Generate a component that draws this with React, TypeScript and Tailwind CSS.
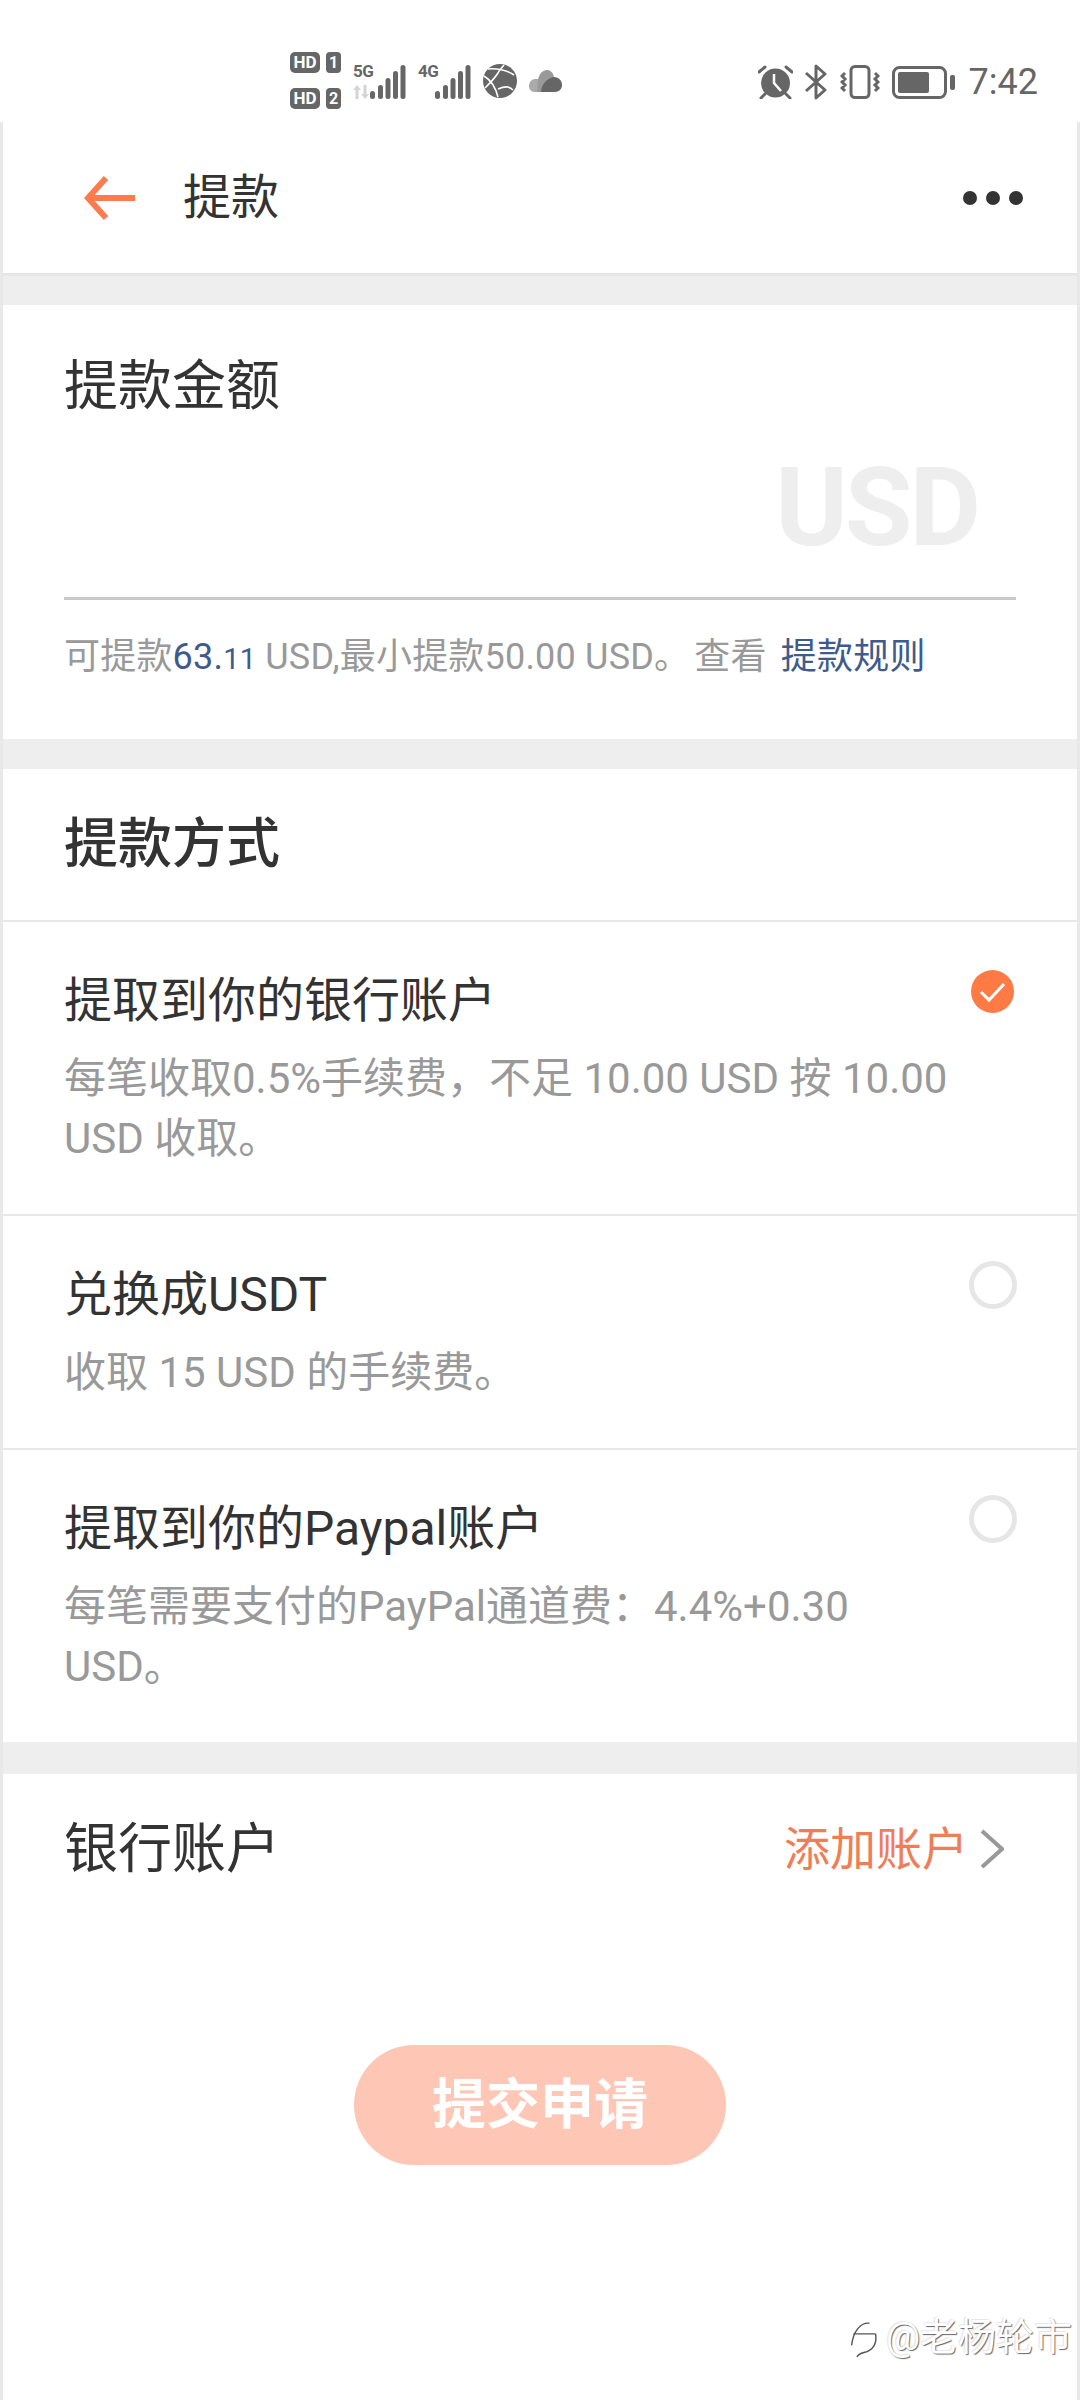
export default function App() {
  return (
    <div className="w-[1080px] h-[2400px] relative overflow-hidden bg-white font-['Roboto','Noto_Sans_CJK_SC',sans-serif] text-[#333333]">
      <StatusBar />
      <div className="h-[2278px] border-x-[3px] border-[#e8e8e8] flex flex-col">
        {/* header */}
        <div className="h-[151px] shrink-0 flex items-center pl-[80px] pr-[54px]">
          <svg width="52" height="44" viewBox="0 0 52 44" fill="none" stroke="#ff7a4d" strokeWidth="6">
            <path d="M23 2 L5 22 L23 42" />
            <path d="M5 22 H52" />
          </svg>
          <span className="ml-[48px] text-[48px] leading-[60px]">提款</span>
          <div className="ml-auto flex gap-[9px]">
            <i className="w-[14px] h-[14px] rounded-full bg-[#333333]" />
            <i className="w-[14px] h-[14px] rounded-full bg-[#333333]" />
            <i className="w-[14px] h-[14px] rounded-full bg-[#333333]" />
          </div>
        </div>
        <div className="h-[32px] shrink-0 bg-[#eeeeee] border-t-[3px] border-[#e6e6e6]" />

        {/* amount */}
        <div className="h-[434px] shrink-0 px-[61px] pt-[50px]">
          <div className="text-[54px] leading-[64px]">提款金额</div>
          <div className="h-[181px] border-b-[3px] border-[#c8c8c8] flex justify-end pr-[38px]">
            <span className="text-[110px] leading-[110px] mt-[34px] font-bold tracking-[-3px] text-[#eeeeee]">USD</span>
          </div>
          <div className="mt-[33px] text-[36px] leading-[48px] tracking-[0.2px] text-[#999999] whitespace-nowrap">
            可提款<span className="text-[#3f5a8c]">63.<span className="text-[29px]">11</span></span> USD,最小提款50.00 USD。<span className="ml-[4px]">查看</span> <span className="ml-[5px] text-[#3f5a8c]">提款规则</span>
          </div>
        </div>
        <div className="h-[30px] shrink-0 bg-[#eeeeee]" />

        {/* method */}
        <div className="h-[151px] shrink-0 flex items-center px-[61px] text-[54px] font-medium">提款方式</div>
        <MethodRow title="提取到你的银行账户" lines={["每笔收取0.5%手续费，不足 10.00 USD 按 10.00", "USD 收取。"]} checked />
        <MethodRow title="兑换成USDT" lines={["收取 15 USD 的手续费。"]} />
        <MethodRow title="提取到你的Paypal账户" lines={["每笔需要支付的PayPal通道费：4.4%+0.30", "USD。"]} />
        <div className="h-[32px] shrink-0 bg-[#eeeeee]" />

        {/* bank */}
        <div className="h-[150px] shrink-0 flex items-center pl-[61px] pr-[73px]">
          <span className="text-[54px]">银行账户</span>
          <span className="ml-auto text-[46px] text-[#ef7d55]">添加账户</span>
          <svg className="ml-[12px]" width="24" height="40" viewBox="0 0 24 40" fill="none" stroke="#999999" strokeWidth="4">
            <path d="M2 2 L22 20 L2 38" />
          </svg>
        </div>
        <div className="mt-[121px] flex justify-center">
          <button className="w-[372px] h-[120px] rounded-full bg-[#fec6b5] text-white text-[54px] font-bold">提交申请</button>
        </div>
      </div>

      {/* watermark */}
      <div className="absolute left-[848px] top-[2312px] flex items-start gap-[6px] whitespace-nowrap text-[38px] leading-[50px] text-white [text-shadow:1px_1px_1px_rgba(0,0,0,0.6),-1px_-1px_1px_rgba(0,0,0,0.1)]">
        <svg className="mt-[6px]" width="32" height="46" viewBox="0 0 36 50" fill="none" stroke="#555555" strokeWidth="1.6">
          <path d="M4 30 C6 14 14 4 24 5 M6 17 H31 M31 17 C33 28 28 36 18 38 C14 39 11 41 10 43" />
        </svg>
        <span>@老杨轮市</span>
      </div>
    </div>
  );
}

function MethodRow({ title, lines, checked }: { title: string; lines: string[]; checked?: boolean }) {
  return (
    <div className="shrink-0 border-t-[2px] border-[#e8e8e8] flex justify-between pl-[61px] pr-[60px] pt-[49px] pb-[45px]">
      <div className="whitespace-nowrap">
        <div className="text-[48px] leading-[60px]">{title}</div>
        <div className="mt-[18px] text-[42px] leading-[60px] text-[#999999]">
          {lines.map((l) => (
            <div key={l}>{l}</div>
          ))}
        </div>
      </div>
      {checked ? (
        <svg className="shrink-0 mt-[-1px] mr-[3px]" width="43" height="43" viewBox="0 0 43 43">
          <circle cx="21.5" cy="21.5" r="21.5" fill="#ff7a45" />
          <path d="M10 22 L18 30 L33 14" fill="none" stroke="#ffffff" strokeWidth="3" />
        </svg>
      ) : (
        <div className="shrink-0 mt-[-4px] w-[48px] h-[48px] rounded-full border-[5px] border-[#e6e6e6]" />
      )}
    </div>
  );
}

function Signal() {
  return (
    <svg width="36" height="35" viewBox="0 0 36 35" fill="#666666">
      <rect x="0" y="26" width="5" height="8" rx="2.5" />
      <rect x="8" y="20" width="5" height="14" rx="2.5" />
      <rect x="15.5" y="13" width="5" height="21" rx="2.5" />
      <rect x="23" y="6" width="5" height="28" rx="2.5" />
      <rect x="30.5" y="0" width="5" height="34" rx="2.5" />
    </svg>
  );
}

function Sim({ n }: { n: string }) {
  return (
    <div className="flex gap-[6px] h-[21px]">
      <span className="w-[30px] h-[21px] rounded-[5px] bg-[#666666] text-white text-[17px] leading-[21px] font-bold text-center">HD</span>
      <span className="w-[15px] h-[21px] rounded-[4px] bg-[#666666] text-white text-[16px] leading-[21px] font-bold text-center">{n}</span>
    </div>
  );
}

function StatusBar() {
  return (
    <div className="h-[122px] flex items-center justify-between pl-[290px] pr-[42px] pt-[38px] text-[#666666]">
      <div className="flex items-center">
        <div className="flex flex-col gap-[15px]">
          <Sim n="1" />
          <Sim n="2" />
        </div>
        <div className="relative ml-[12px] w-[53px] h-[35px] flex items-end justify-end mt-[4px]">
          <span className="absolute left-0 top-[-3px] text-[17px] leading-[18px] font-bold tracking-[-0.5px]">5G</span>
          <svg className="absolute left-0 bottom-[1px]" width="16" height="14" viewBox="0 0 16 14" fill="#d4d4d4">
            <path d="M4 0 L8 5 H5.5 V14 H2.5 V5 H0 Z M12 14 L8 9 H10.5 V0 H13.5 V9 H16 Z" />
          </svg>
          <Signal />
        </div>
        <div className="relative ml-[12px] w-[53px] h-[35px] flex items-end justify-end mt-[4px]">
          <span className="absolute left-0 top-[-3px] text-[17px] leading-[18px] font-bold tracking-[-0.5px]">4G</span>
          <Signal />
        </div>
        <svg className="ml-[12px] mt-[2px]" width="34" height="34" viewBox="0 0 34 34">
          <circle cx="17" cy="17" r="17" fill="#666666" />
          <path d="M1 12 C6 15 12 21 15 33 M5 5 C13 4 24 6 31 11 M21 1 C18 5 17 5 15 9 C12 14 8 18 2 24 M30 26 C26 22 22 22 15 25" fill="none" stroke="#ffffff" strokeWidth="1.6" />
        </svg>
        <svg className="ml-[12px] mt-[2px]" width="33" height="23" viewBox="0 0 33 23">
          <path d="M6 9 C2 9 0 13 0 16 C0 20 3 22 6 22 H14 V9 Z" fill="#aaaaaa" />
          <path d="M9 12 C9 4 14 0 18 0 C21 0 24 2 25 7 L14 22 H8 Z" fill="#999999" />
          <path d="M25 7 C30 7 33 11 33 15 C33 19 30 22 26 22 H12 C12 15 18 8 25 7 Z" fill="#666666" />
        </svg>
      </div>

      <div className="flex items-center mt-[4px]">
        <svg width="35" height="34" viewBox="0 0 35 34">
          <circle cx="17.5" cy="18" r="14.5" fill="#666666" />
          <path d="M16 9 V18 L23 26" fill="none" stroke="#ffffff" strokeWidth="2.5" />
          <path d="M1 7 L7 2 M34 7 L28 2 M3 33 L7 29 M32 33 L28 29" stroke="#666666" strokeWidth="3" strokeLinecap="round" />
        </svg>
        <svg className="ml-[12px]" width="22" height="36" viewBox="0 0 22 36" fill="none" stroke="#666666" strokeWidth="3">
          <path d="M1 9 L20 26 L11 34 V2 L20 10 L1 27" strokeLinejoin="round" />
        </svg>
        <svg className="ml-[13px]" width="40" height="34" viewBox="0 0 40 34" fill="none" stroke="#666666" strokeWidth="3">
          <rect x="11" y="1.5" width="18" height="31" rx="4" />
          <path d="M5 8 L2 11 L5 14 L2 17 L5 20 L2 23 L5 26 M35 8 L38 11 L35 14 L38 17 L35 20 L38 23 L35 26" />
        </svg>
        <svg className="ml-[12px]" width="63" height="33" viewBox="0 0 63 33">
          <rect x="1.5" y="1.5" width="52" height="30" rx="6" fill="none" stroke="#666666" strokeWidth="3" />
          <rect x="6" y="6" width="31" height="21" rx="2" fill="#666666" />
          <rect x="58" y="9" width="5" height="15" rx="2" fill="#666666" />
        </svg>
        <span className="ml-[14px] text-[36px] leading-[40px]">7:42</span>
      </div>
    </div>
  );
}
